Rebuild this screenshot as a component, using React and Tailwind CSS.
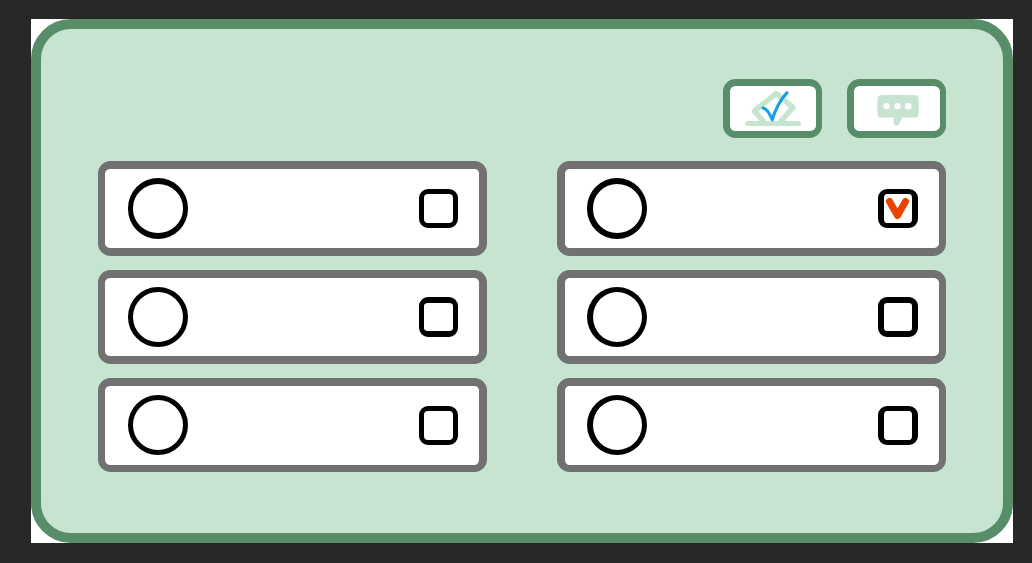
const rows = [
  { card: "h-[95px] border-b-8", circle: "h-[61px] border-y-[6px]", box: "mt-[11px] h-[39px] border-y-[5px]" },
  { card: "h-[94px] border-b-8", circle: "h-[60px] border-y-[5px]", box: "mt-[10px] h-[40px] border-y-[6px]" },
  { card: "h-[94px] border-b-[7px]", circle: "h-[60px] border-y-[5px]", box: "mt-[11px] h-[39px] border-y-[5px]" },
];

function BallotIcon() {
  return (
    <svg className="h-[45px] w-[86px]" viewBox="730 86 86 45" fill="none" strokeLinecap="round" strokeLinejoin="round">
      <path d="M747.5 123.5H798.5" stroke="#c7e4d1" strokeWidth="5" />
      <path d="M763 121L754.5 111L776.2 93.500L793 107.500L781 121" stroke="#c7e4d1" strokeWidth="5.5" />
      <path d="M763 108C767 109 770 114 772.200 119.800C775 110 781 98.500 787 92.800" stroke="#14a0e8" strokeWidth="3.1" />
    </svg>
  );
}

function ChatIcon() {
  return (
    <svg className="h-[45px] w-[86px]" viewBox="854 86 86 45">
      <path d="M880.500 95.200Q898 94.500 915.500 95.200Q918.500 95.500 918.500 98Q919.200 106 918.500 114.500Q918.300 117.300 915.500 117.500H902.500L899 124.200Q897.500 126 895 125.500Q893.300 125 893.500 117.500H880.500Q877.500 117.300 877.500 114.500Q877 106 877.500 98Q877.800 95.500 880.500 95.200Z" fill="#c7e4d1" />
      <g fill="#fff">
        <circle cx="886.5" cy="106.3" r="3.2" />
        <circle cx="897.5" cy="106.3" r="3.2" />
        <circle cx="908.3" cy="106.3" r="3.2" />
      </g>
    </svg>
  );
}

function Card({ row, right, checked }) {
  return (
    <div className={`flex w-[389px] items-start justify-between rounded-[12.5px] border-t-8 border-[#717171] bg-white pt-[9px] pr-[21px] ${row.card} ${right ? "border-r-[7px] border-l-8 pl-[22px]" : "border-r-8 border-l-[7px] pl-[23px]"}`}>
      <div className={`w-[60px] rounded-full border-r-[5px] border-black ${row.circle} ${right ? "border-l-[6px]" : "border-l-[5px]"}`} />
      <div className={`flex items-center justify-center rounded-[9px] border-black ${row.box} ${right ? "w-[40px] border-x-[6px]" : "w-[39px] border-x-[5px]"}`}>
        {checked && (
          <svg className="h-[29px] w-[28px] shrink-0" viewBox="884 194 28 29" fill="none">
            <path d="M889.500 201.500L897.500 215.500L905.500 201.500" stroke="#e84300" strokeWidth="7" strokeLinecap="round" strokeLinejoin="round" />
          </svg>
        )}
      </div>
    </div>
  );
}

export default function App() {
  return (
    <main className="h-[563px] w-[1032px] bg-[#282828] pt-[19px] pl-[31px]">
      <div className="h-[524px] w-[982px] bg-white">
        <section className="flex h-full flex-col rounded-[40px] border-[10px] border-[#578d68] bg-[#c7e4d1] px-[57px] pt-[50px]">
          <div className="flex justify-end gap-[25px]">
            <button aria-label="Vote" className="h-[59px] w-[99px] rounded-[12.5px] border-[7px] border-r-[6px] border-[#578d68] bg-white">
              <BallotIcon />
            </button>
            <button aria-label="Chat" className="h-[59px] w-[99px] rounded-[12.5px] border-[7px] border-r-[6px] border-[#578d68] bg-white">
              <ChatIcon />
            </button>
          </div>
          <div className="mt-[23px] grid grid-cols-[389px_389px] gap-x-[70px] gap-y-[14px]">
            {rows.map((row, i) => [
              <Card key={`l${i}`} row={row} />,
              <Card key={`r${i}`} row={row} right checked={i === 0} />,
            ])}
          </div>
        </section>
      </div>
    </main>
  );
}
